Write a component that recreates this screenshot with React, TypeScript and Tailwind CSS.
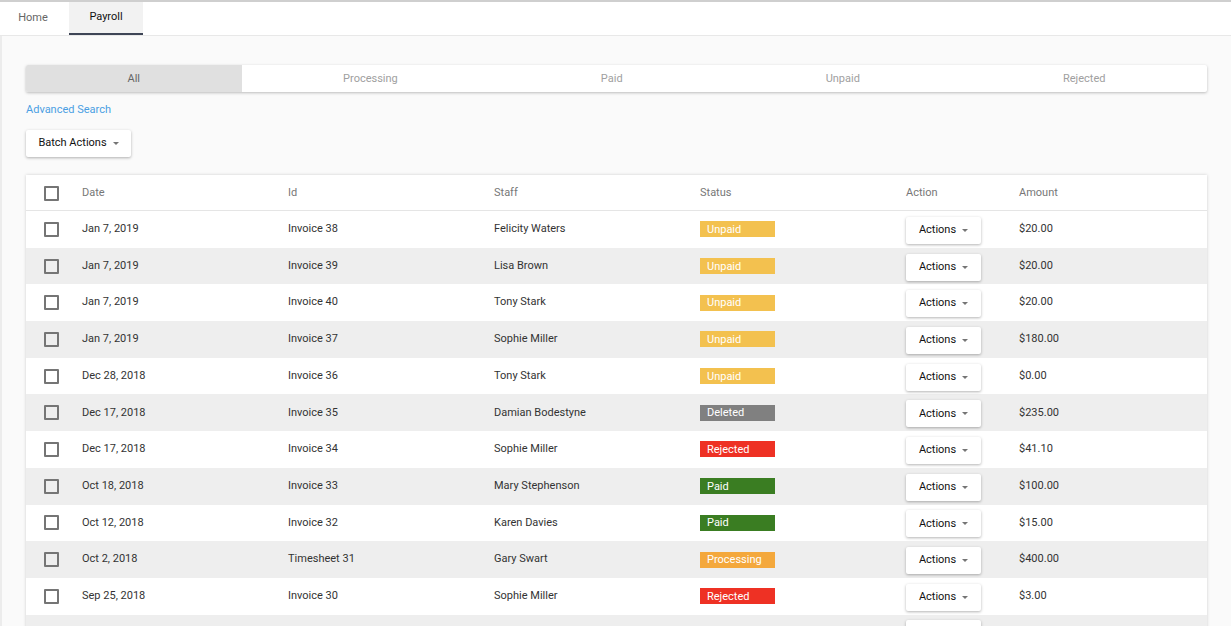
import React from "react";

type Row = { date: string; id: string; staff: string; status: string; amount: string };

const rows: Row[] = [
  { date: "Jan 7, 2019", id: "Invoice 38", staff: "Felicity Waters", status: "Unpaid", amount: "$20.00" },
  { date: "Jan 7, 2019", id: "Invoice 39", staff: "Lisa Brown", status: "Unpaid", amount: "$20.00" },
  { date: "Jan 7, 2019", id: "Invoice 40", staff: "Tony Stark", status: "Unpaid", amount: "$20.00" },
  { date: "Jan 7, 2019", id: "Invoice 37", staff: "Sophie Miller", status: "Unpaid", amount: "$180.00" },
  { date: "Dec 28, 2018", id: "Invoice 36", staff: "Tony Stark", status: "Unpaid", amount: "$0.00" },
  { date: "Dec 17, 2018", id: "Invoice 35", staff: "Damian Bodestyne", status: "Deleted", amount: "$235.00" },
  { date: "Dec 17, 2018", id: "Invoice 34", staff: "Sophie Miller", status: "Rejected", amount: "$41.10" },
  { date: "Oct 18, 2018", id: "Invoice 33", staff: "Mary Stephenson", status: "Paid", amount: "$100.00" },
  { date: "Oct 12, 2018", id: "Invoice 32", staff: "Karen Davies", status: "Paid", amount: "$15.00" },
  { date: "Oct 2, 2018", id: "Timesheet 31", staff: "Gary Swart", status: "Processing", amount: "$400.00" },
  { date: "Sep 25, 2018", id: "Invoice 30", staff: "Sophie Miller", status: "Rejected", amount: "$3.00" },
];

function Badge({ status }: { status: string }) {
  const cls =
    status === "Unpaid"
      ? "bg-[#f3c14f]"
      : status === "Deleted"
      ? "bg-[#808080]"
      : status === "Rejected"
      ? "bg-[#ee3124]"
      : status === "Paid"
      ? "bg-[#3a7d22]"
      : "bg-[#f4a83c]";
  return (
    <div className={`${cls} w-[75px] h-[16px] flex items-center pl-[7px] text-white text-[11px] leading-none`}>
      {status}
    </div>
  );
}

function Caret() {
  return <span className="inline-block w-0 h-0 border-l-[3.5px] border-r-[3.5px] border-t-[3.5px] border-l-transparent border-r-transparent border-t-[#757575] ml-[6px]" />;
}

function Checkbox() {
  return <div className="w-[15px] h-[15px] border-2 border-[#757575] rounded-[1px]" />;
}

const cols = "grid grid-cols-[56px_206px_206px_206px_206px_113px_1fr]";

export default function App() {
  const filters = ["All", "Processing", "Paid", "Unpaid", "Rejected"];
  return (
    <div
      className="h-[626px] overflow-hidden bg-[#fafafa] text-[11px] text-[#333]"
      style={{ fontFamily: "Roboto, 'Liberation Sans', sans-serif" }}
    >
      <div className="h-[36px] bg-white border-t-2 border-[#cfcfcf] border-b border-b-[#e8e8e8] flex">
        <div className="w-[66px] flex items-center justify-center text-[#666]">Home</div>
        <div className="w-[74px] ml-[3px] flex items-center justify-center bg-[#f2f2f2] border-b-2 border-[#3e4556] text-[#111]">
          Payroll
        </div>
      </div>
      <div className="border-l-2 border-[#ececec] h-full pl-[24px] pr-[24px]">
        <div className="pt-[29px] w-[1181px]">
          <div className="flex h-[27px] bg-white shadow-[0_1px_3px_rgba(0,0,0,0.25)] rounded-[2px] overflow-hidden">
            {filters.map((f, i) => (
              <div
                key={f}
                className={`flex-auto flex items-center justify-center pt-[1px] ${i === 0 ? "bg-[#e0e0e0] text-[#666]" : "text-[#a0a0a0]"}`}
              >
                {f}
              </div>
            ))}
          </div>
          <div className="mt-[11px] text-[#4a9fe3] leading-[13px]">Advanced Search</div>
          <div className="mt-[14px] w-[105px] h-[27px] bg-white shadow-[0_1px_3px_rgba(0,0,0,0.3)] rounded-[2px] flex items-center justify-center text-[#111]">
            Batch Actions
            <Caret />
          </div>
          <div className="mt-[18px] bg-white shadow-[0_0_3px_rgba(0,0,0,0.18)]">
            <div className={`${cols} h-[36px] items-center border-b border-[#e5e5e5] text-[#777] pt-[1px]`}>
              <div className="pl-[18px]">
                <Checkbox />
              </div>
              <div>Date</div>
              <div>Id</div>
              <div>Staff</div>
              <div>Status</div>
              <div>Action</div>
              <div>Amount</div>
            </div>
            {rows.map((r, i) => (
              <div
                key={i}
                className={`${cols} h-[36.7px] items-center ${i % 2 === 1 ? "bg-[#eeeeee]" : "bg-white"}`}
              >
                <div className="pl-[18px]">
                  <Checkbox />
                </div>
                <div>{r.date}</div>
                <div>{r.id}</div>
                <div>{r.staff}</div>
                <div>
                  <Badge status={r.status} />
                </div>
                <div>
                  <div className="w-[75px] h-[27px] mt-[2px] bg-white shadow-[0_1px_3px_rgba(0,0,0,0.3)] rounded-[2px] flex items-center justify-center text-[#111]">
                    Actions
                    <Caret />
                  </div>
                </div>
                <div>{r.amount}</div>
              </div>
            ))}
            <div className={`${cols} h-[36.7px] bg-[#eeeeee]`}>
              <div />
              <div />
              <div />
              <div />
              <div />
              <div className="pt-[5px]">
                <div className="w-[75px] h-[27px] bg-white shadow-[0_1px_3px_rgba(0,0,0,0.3)] rounded-[2px]" />
              </div>
              <div />
            </div>
          </div>
        </div>
      </div>
    </div>
  );
}
